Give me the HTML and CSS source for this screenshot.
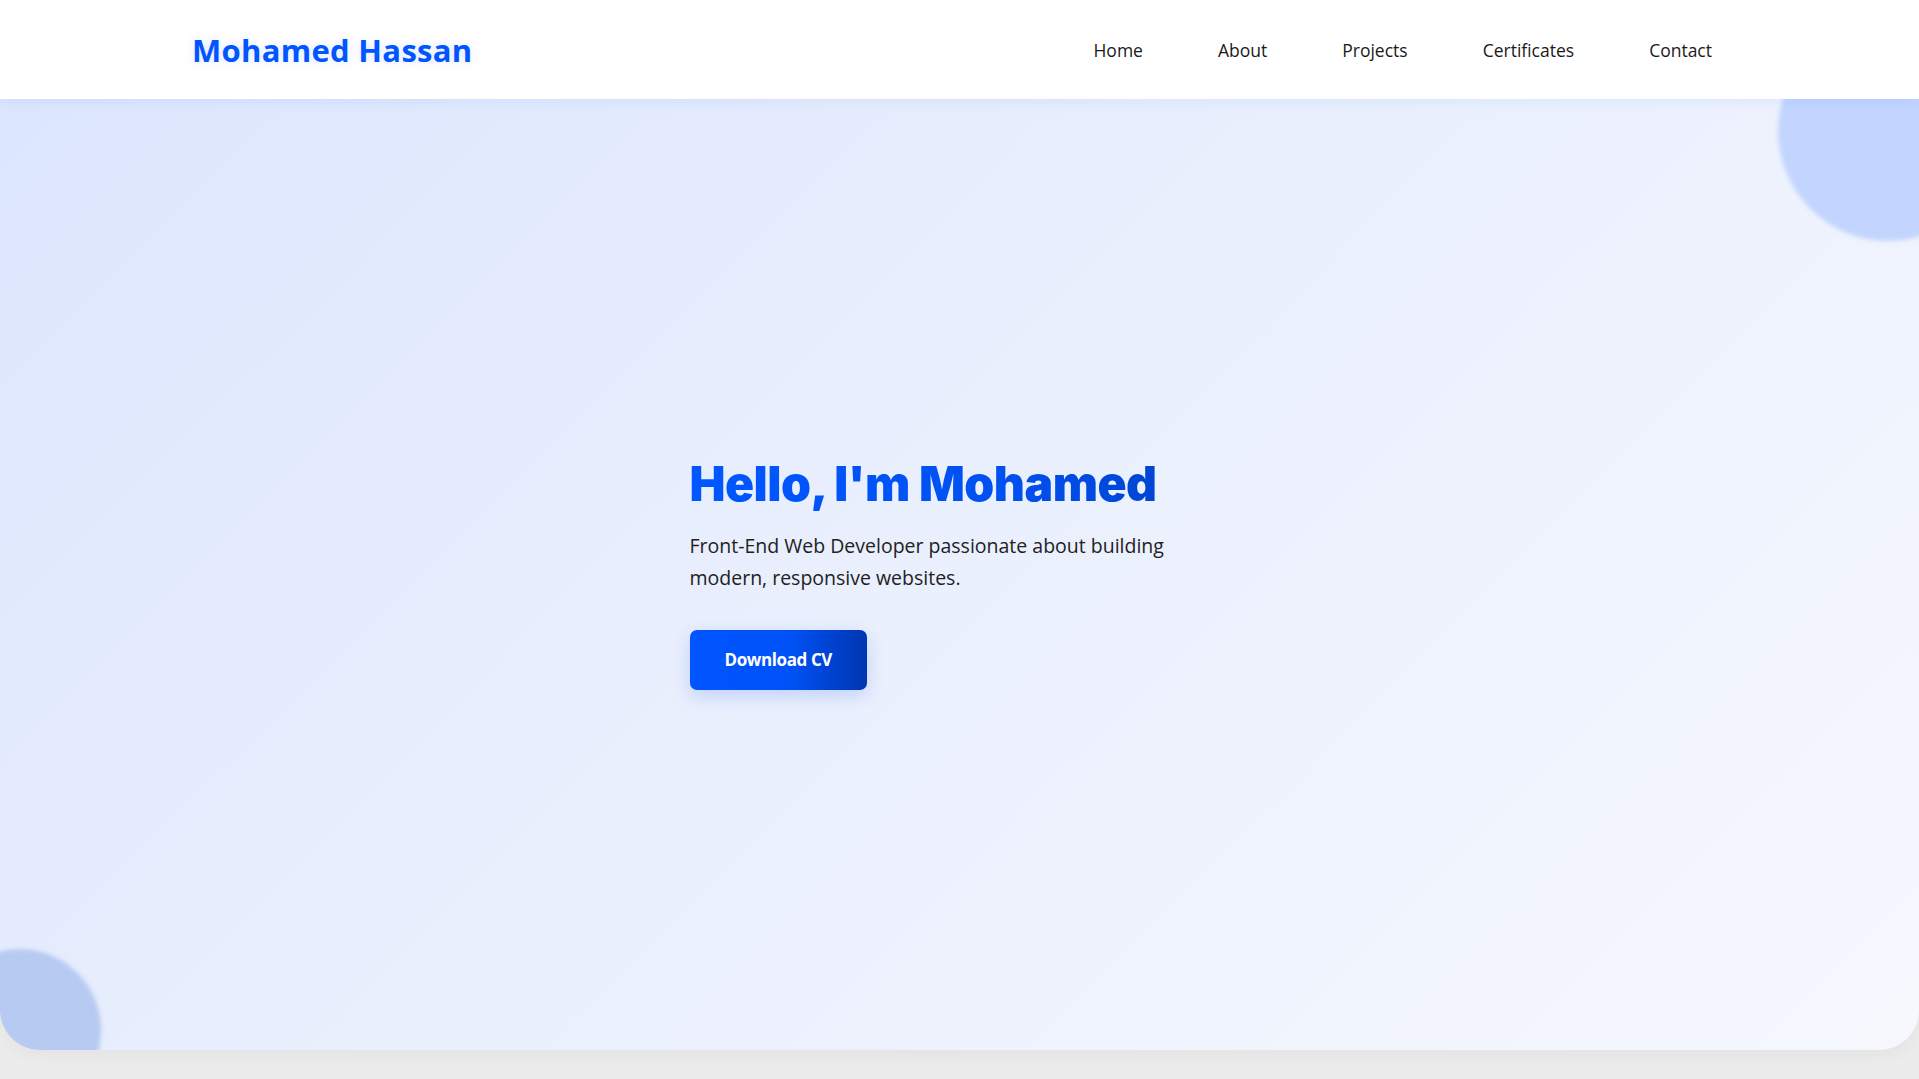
FILE: index.html
```html
<!DOCTYPE html>
<html lang="en">
<head>
<meta charset="utf-8">
<title>Mohamed Hassan</title>
<link rel="stylesheet" href="styles.css">
</head>
<body>
<header class="site-header">
  <a class="logo" href="#">Mohamed Hassan</a>
  <nav class="nav">
    <a href="#">Home</a>
    <a href="#">About</a>
    <a href="#">Projects</a>
    <a href="#">Certificates</a>
    <a href="#">Contact</a>
  </nav>
</header>
<section class="hero">
  <span class="blob blob-top"></span>
  <span class="blob blob-bottom"></span>
  <div class="hero-content">
    <h1 class="hero-title">Hello, I'm Mohamed</h1>
    <p class="hero-text">Front-End Web Developer passionate about building modern, responsive websites.</p>
    <a class="btn" href="#">Download CV</a>
  </div>
</section>
</body>
</html>
```

FILE: styles.css
```css
* { box-sizing: border-box; }
html, body { margin: 0; padding: 0; }
body {
  background: #ececed;
  font-family: "Open Sans", "Noto Sans", sans-serif;
  color: #1f1f1f;
  height: 1079px;
  overflow: hidden;
}
a { text-decoration: none; }

.site-header {
  position: relative;
  z-index: 2;
  height: 99px;
  background: #ffffff;
  display: flex;
  align-items: center;
  justify-content: space-between;
  padding: 0 207px 0 192px;
  box-shadow: 0 2px 14px rgba(0, 85, 255, 0.08);
}
.logo {
  font-size: 31px;
  font-weight: 700;
  color: #0055ff;
  letter-spacing: 0.3px;
  text-shadow: 0 0 10px rgba(0, 85, 255, 0.15);
}
.nav {
  display: flex;
  gap: 75px;
}
.nav a {
  font-size: 17.5px;
  font-weight: 500;
  color: #1a1a1a;
}

.hero {
  position: relative;
  height: 951px;
  overflow: hidden;
  border-radius: 0 0 40px 40px;
  background: linear-gradient(135deg, #dce6fd 0%, #e9effd 45%, #f6f8fe 100%);
  display: flex;
  align-items: center;
  justify-content: center;
  box-shadow: 0 6px 18px rgba(0, 0, 0, 0.04);
}
.blob {
  position: absolute;
  border-radius: 50%;
  filter: blur(2px);
}
.blob-top {
  width: 220px;
  height: 220px;
  right: -79px;
  top: -78px;
  background: #c3d5fe;
}
.blob-bottom {
  width: 162px;
  height: 162px;
  left: -61px;
  bottom: -61px;
  background: #b7caf1;
}
.hero-content {
  width: 540px;
  margin-top: -4px;
}
.hero-title {
  margin: 0;
  font-family: "Inter", "Open Sans", sans-serif;
  font-weight: 900;
  font-size: 48px;
  line-height: 1.2;
  letter-spacing: -0.5px;
  background: linear-gradient(90deg, #0057ff 0%, #0050f0 60%, #003fc4 100%);
  -webkit-background-clip: text;
  background-clip: text;
  color: transparent;
}
.hero-text {
  margin: 18px 0 36px;
  font-size: 19.5px;
  line-height: 32px;
  color: #222222;
}
.btn {
  display: inline-block;
  padding: 0 35px;
  height: 60px;
  line-height: 60px;
  border-radius: 7px;
  font-size: 17px;
  font-weight: 700;
  color: #ffffff;
  letter-spacing: -0.4px;
  background: linear-gradient(90deg, #0055ff 0%, #0052f8 55%, #0036b0 100%);
  box-shadow: 0 6px 18px rgba(0, 70, 230, 0.18);
}
```
